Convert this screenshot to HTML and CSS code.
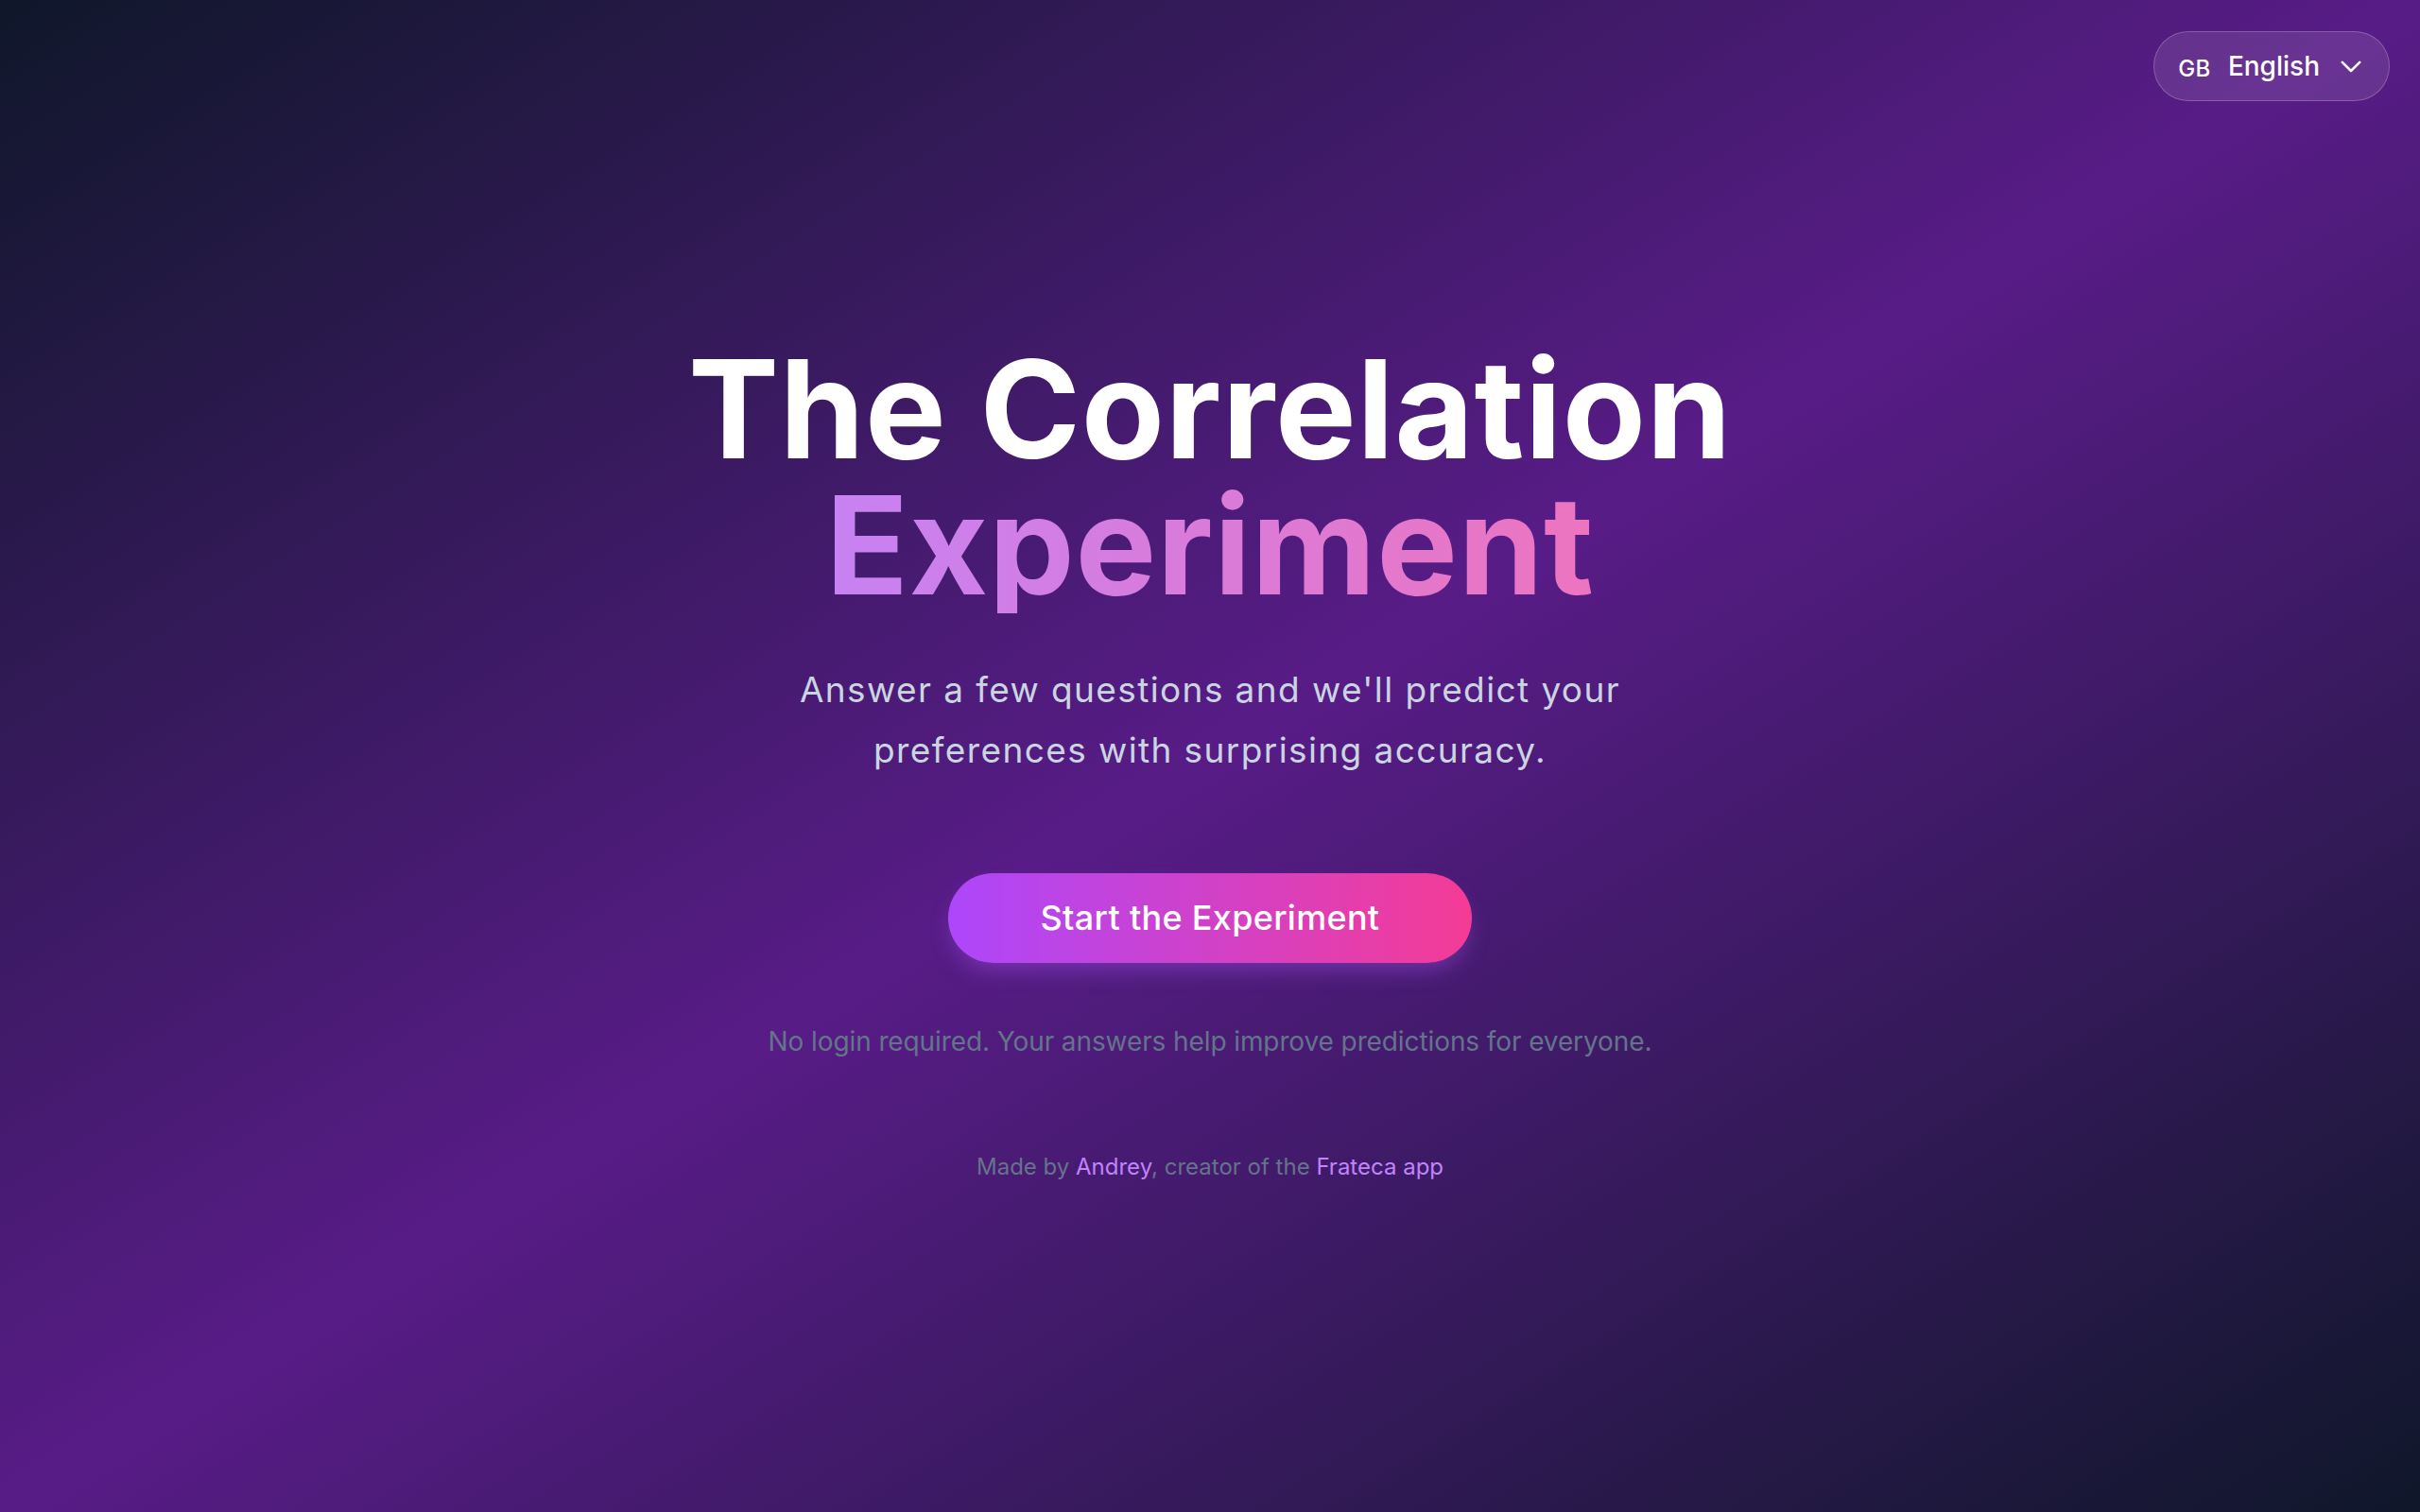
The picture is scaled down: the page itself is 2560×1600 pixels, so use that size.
FILE: index.html
```html
<!DOCTYPE html>
<html lang="en">
<head>
    <meta charset="utf-8">
    <title>The Correlation Experiment</title>
    <link rel="stylesheet" href="styles.css">
</head>
<body>

    <!-- language picker -->
    <div class="lang">
        <button class="lang-btn" type="button">
            <span class="lang-flag">GB</span>
            <span class="lang-name">English</span>
            <svg class="lang-chevron" width="22" height="13" viewBox="0 0 22 13" fill="none" stroke="currentColor" stroke-width="2.6" stroke-linecap="round" stroke-linejoin="round">
                <polyline points="1.8,1.8 11,11 20.2,1.8"></polyline>
            </svg>
        </button>
    </div>

    <main class="hero">
        <h1 class="title">
            <span class="title-line">The Correlation</span>
            <span class="title-line title-accent">Experiment</span>
        </h1>

        <p class="lead">Answer a few questions and we'll predict your preferences with surprising accuracy.</p>

        <button class="start-btn" type="button">Start the Experiment</button>

        <p class="note">No login required. Your answers help improve predictions for everyone.</p>

        <footer class="credit">
            Made by <a href="#">Andrey</a>, creator of the <a href="#">Frateca app</a>
        </footer>
    </main>

</body>
</html>
```

FILE: styles.css
```css
html, body { margin: 0; padding: 0; }
body {
    min-height: 100vh;
    font-family: Inter, "Noto Sans", Arial, sans-serif;
    color: #fff;
    background: linear-gradient(to bottom right, #0f172a, #581c87, #0f172a);
}

/* language picker */
.lang { position: absolute; top: 33px; right: 32px; }
.lang-btn {
    display: flex; align-items: center;
    height: 74px; padding: 0 29px 0 25px;
    background: rgba(255, 255, 255, 0.1);
    border: 1px solid rgba(255, 255, 255, 0.22);
    border-radius: 999px;
    color: #fff; font-family: inherit; cursor: pointer;
}
.lang-flag { font-size: 24px; font-weight: 500; letter-spacing: 0.5px; margin-top: 4px; }
.lang-name { font-size: 28px; font-weight: 500; margin-left: 18px; }
.lang-chevron { margin-left: 22px; }

/* hero */
.hero {
    min-height: 100vh; box-sizing: border-box;
    display: flex; flex-direction: column; align-items: center; justify-content: center;
    padding-top: 14px;
    text-align: center;
}
.title { margin: 0; font-size: 144px; line-height: 1; font-weight: 700; letter-spacing: 0.005em; }
.title-line { display: block; }
.title-accent {
    background: linear-gradient(to right, #c084fc, #f472b6);
    -webkit-background-clip: text; background-clip: text;
    color: transparent;
}
.lead {
    max-width: 960px; margin: 49px 0 0;
    font-size: 37px; line-height: 64px; letter-spacing: 1.4px; color: #cbd5e1;
}
.start-btn {
    margin-top: 98px;
    padding: 20px 98px; line-height: 55px;
    font-family: inherit; font-size: 36px; font-weight: 500; letter-spacing: 0.3px; color: #fff;
    background: linear-gradient(to right, #ad47fb, #f43b95);
    border: none; border-radius: 999px; cursor: pointer;
    box-shadow: 0 12px 24px -6px rgba(168, 85, 247, 0.45);
}
.note { margin: 62px 0 0; font-size: 28px; line-height: 42px; letter-spacing: -0.1px; color: #64748b; }
.credit { margin-top: 94px; font-size: 24px; line-height: 36px; color: #64748b; }
.credit a { color: #c084fc; text-decoration: none; }
```
